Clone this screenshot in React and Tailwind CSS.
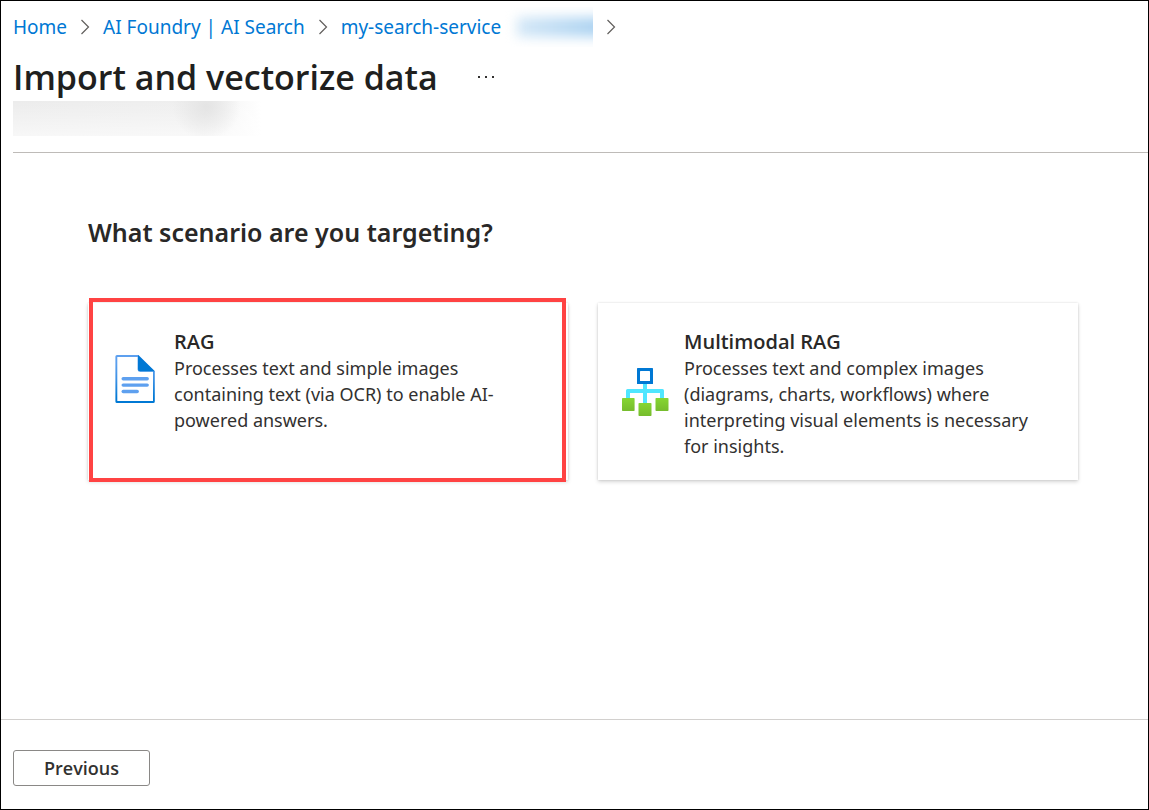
import React from "react";

function Chevron() {
  return (
    <svg aria-hidden="true" viewBox="0 0 10 16" className="h-4 w-[10px] shrink-0" fill="none" stroke="#605e5c" strokeWidth="1.2">
      <path d="M1.5 1 L8.5 8 L1.5 15" />
    </svg>
  );
}

function DocumentIcon() {
  return (
    <svg aria-hidden="true" viewBox="0 0 48 48" className="size-12 shrink-0">
      <defs>
        <linearGradient id="doc-edge" x1="0" y1="0" x2="0" y2="1">
          <stop offset="0" stopColor="#5ea0ef" />
          <stop offset="0.2" stopColor="#589eed" />
          <stop offset="0.5" stopColor="#3c91e5" />
          <stop offset="0.9" stopColor="#0078d4" />
        </linearGradient>
      </defs>
      <path d="M26.5 0H5a1.6 1.6 0 0 0-1.6 1.6v44.8A1.6 1.6 0 0 0 5 48h36.2a1.6 1.6 0 0 0 1.6-1.6V16.2z" fill="url(#doc-edge)" />
      <path d="M25.6 2v12.400a2.400 2.400 0 0 0 2.400 2.400H41V46H5.300V2z" fill="#fff" />
      <path d="M26 0v14a2.200 2.200 0 0 0 2.200 2.200h14.600z" fill="#0078d4" />
      <g fill="#5ea0ef">
        <rect x="9.500" y="22" width="27.400" height="3.400" rx="1.700" />
        <rect x="9.500" y="28.400" width="27.400" height="3.400" rx="1.700" />
        <rect x="9.500" y="34.800" width="17.400" height="3.400" rx="1.700" />
      </g>
    </svg>
  );
}

function HierarchyIcon() {
  return (
    <svg aria-hidden="true" viewBox="0 0 48 48" className="size-12 shrink-0">
      <defs>
        <linearGradient id="leaf" x1="0" y1="1" x2="0" y2="0">
          <stop offset="0" stopColor="#76bc2d" />
          <stop offset="1" stopColor="#86d633" />
        </linearGradient>
      </defs>
      <path d="M21 15h4v6h15.500a1.500 1.500 0 0 1 1.500 1.500V31h-4v-6H25v11h-4V25H8v6h-4v-8.500A1.500 1.500 0 0 1 5.500 21H21z" fill="#50e6ff" />
      <rect x="15" y="0" width="16" height="16" rx="0.600" fill="#0078d4" />
      <rect x="18" y="3" width="10" height="10" rx="0.500" fill="#fff" />
      <rect x="0" y="30" width="12.600" height="13" rx="0.700" fill="url(#leaf)" />
      <rect x="16.500" y="35" width="13" height="13" rx="0.700" fill="url(#leaf)" />
      <rect x="33.500" y="30" width="13" height="13" rx="0.700" fill="url(#leaf)" />
    </svg>
  );
}

function ScenarioCard({ icon, title, children, selected = false }) {
  return (
    <button
      type="button"
      aria-pressed={selected}
      className="relative flex items-start bg-white px-6 pt-[25px] pb-[21px] text-left shadow-[0_2px_4px_rgba(0,0,0,0.16),0_0_2px_rgba(0,0,0,0.12)]"
    >
      <span className="flex items-center gap-[14px]">
        <span className="block pb-1">{icon}</span>
        <span className="block">
          <span className="block font-['Open_Sans',sans-serif] text-[20px] leading-[27px] font-semibold text-[#292827]">{title}</span>
          <span className="block text-[18px] leading-[26px] text-[#323130]">{children}</span>
        </span>
      </span>
      {selected && (
        <span className="pointer-events-none absolute -top-[5px] right-[2px] -bottom-[2px] left-px border-4 border-[#ff4343]" />
      )}
    </button>
  );
}

export default function App() {
  return (
    <div className="flex min-h-screen flex-col border border-black bg-white font-['Noto_Sans','Open_Sans',sans-serif] text-[#292827]">
      <header className="ml-3 border-b border-[#bebbb8]">
        <nav aria-label="Breadcrumb" className="flex h-[51px] items-center gap-[13px] text-[19px] leading-[26px] text-[#0078d4]">
          <a href="#home">Home</a>
          <Chevron />
          <a href="#search">AI Foundry | AI Search</a>
          <Chevron />
          <a href="#service" className="flex items-center">
            my-search-service
            <span className="h-10 w-[92px] overflow-hidden">
              <span className="mt-[10px] ml-4 block h-5 w-24 bg-gradient-to-r from-[#d5e8f7] to-[#a5cff0] blur-[6px]" />
            </span>
          </a>
          <Chevron />
        </nav>
        <div className="flex h-[49px] items-center gap-10">
          <h1 className="font-['Open_Sans',sans-serif] text-[34px] leading-[48px] font-semibold text-[#201f1e]">Import and vectorize data</h1>
          <button type="button" aria-label="More actions" className="flex gap-[5px]">
            <span className="size-[2px] bg-[#323130]" />
            <span className="size-[2px] bg-[#323130]" />
            <span className="size-[2px] bg-[#323130]" />
          </button>
        </div>
        <div className="mb-4 h-[35px] w-[248px] bg-[radial-gradient(circle_at_78%_15%,#e4e4e4_0,transparent_34px),linear-gradient(to_bottom,transparent,#ffffff99),linear-gradient(to_right,#ececec,#efefef_75%,#ffffff)]" />
      </header>

      <main className="flex-1 pt-[59px] pr-[69px] pl-[87px]">
        <h2 className="text-[25px] leading-10 font-semibold">What scenario are you targeting?</h2>
        <div className="mt-[51px] grid max-w-[990px] grid-cols-2 gap-[30px]">
          <ScenarioCard icon={<DocumentIcon />} title="RAG" selected>
            Processes text and simple images containing text (via OCR) to enable AI-powered answers.
          </ScenarioCard>
          <ScenarioCard icon={<HierarchyIcon />} title="Multimodal RAG">
            Processes text and complex images (diagrams, charts, workflows) where interpreting visual elements is necessary for insights.
          </ScenarioCard>
        </div>
      </main>

      <footer className="border-t border-[#d2d0ce] px-3 pt-[30px] pb-[23px]">
        <button type="button" className="h-9 rounded-[3px] border border-[#8a8886] px-[30px] font-['Open_Sans',sans-serif] text-[18px] leading-6 font-semibold text-[#323130]">
          Previous
        </button>
      </footer>
    </div>
  );
}
